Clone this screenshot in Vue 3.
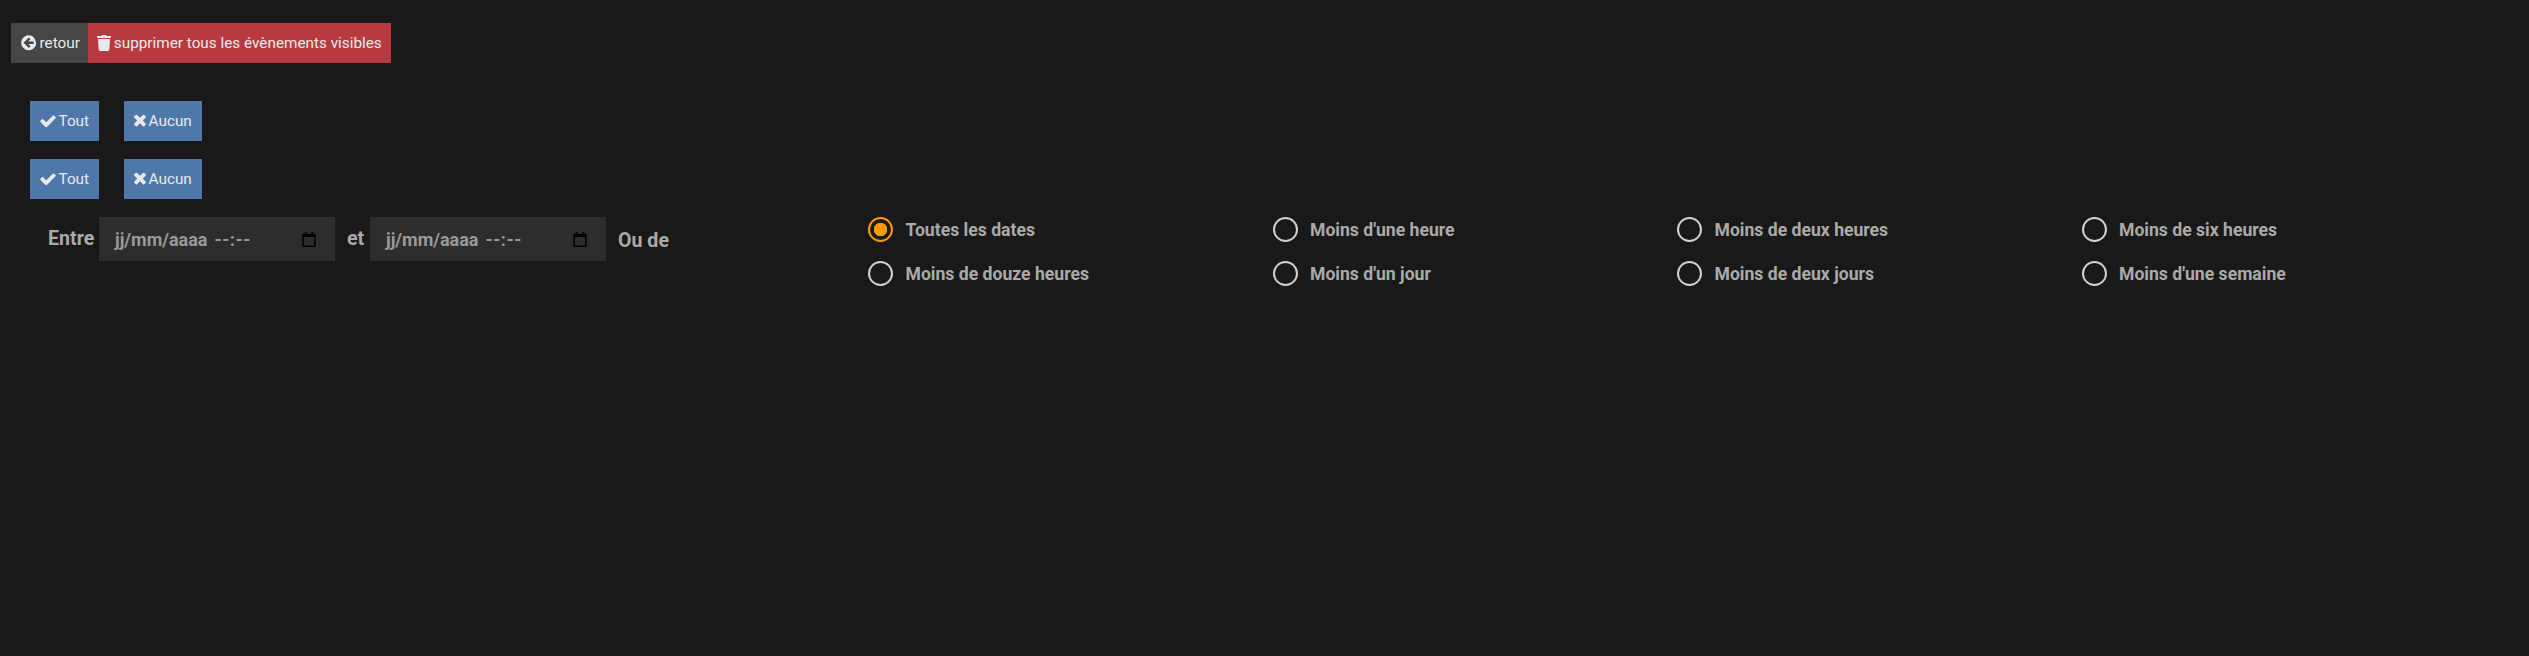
<template>
  <div class="page">
    <div class="actions">
      <a class="btn back">
        <svg class="icon" viewBox="0 0 1792 1792"><path :d="icons.back" /></svg>
        retour
      </a>
      <a class="btn danger">
        <svg class="icon trash" viewBox="0 0 448 512"><path :d="icons.trash" /></svg>
        supprimer tous les évènements visibles
      </a>
    </div>

    <div class="select-row" v-for="n in 2" :key="n">
      <a class="btn blue">
        <svg class="icon big" viewBox="0 0 1792 1792"><path :d="icons.check" /></svg>
        Tout
      </a>
      <a class="btn blue">
        <svg class="icon big narrow" viewBox="0 0 1408 1792"><path :d="icons.times" /></svg>
        Aucun
      </a>
    </div>

    <div class="filters">
      <div class="dates">
        <label class="lbl entre">Entre</label>
        <div class="date-input">
          <span class="date-text">jj/mm/aaaa</span>
          <span class="time-text">--:--</span>
          <svg class="cal" viewBox="0 0 16 18"><path :d="icons.calendar" /></svg>
        </div>
        <label class="lbl et">et</label>
        <div class="date-input">
          <span class="date-text">jj/mm/aaaa</span>
          <span class="time-text">--:--</span>
          <svg class="cal" viewBox="0 0 16 18"><path :d="icons.calendar" /></svg>
        </div>
        <label class="lbl ou">Ou de</label>
      </div>
      <div class="ranges">
        <label class="range" v-for="r in ranges" :key="r">
          <span class="radio" :class="{ on: r === selected }" @click="selected = r"></span>
          {{ r }}
        </label>
      </div>
    </div>
  </div>
</template>

<script setup>
import { ref } from "vue"

const ranges = [
  "Toutes les dates",
  "Moins d'une heure",
  "Moins de deux heures",
  "Moins de six heures",
  "Moins de douze heures",
  "Moins d'un jour",
  "Moins de deux jours",
  "Moins d'une semaine",
]

const selected = ref("Toutes les dates")

const icons = {
  back: "M1408 960v-128q0-26-19-45t-45-19h-502l189-189q19-19 19-45t-19-45l-91-91q-18-18-45-18t-45 18l-362 362-91 91q-18 18-18 45t18 45l91 91 362 362q18 18 45 18t45-18l91-91q18-18 18-45t-18-45l-189-189h502q26 0 45-19t19-45zm256-64q0 209-103 385.5t-279.5 279.5-385.5 103-385.5-103-279.5-279.5-103-385.5 103-385.5 279.5-279.5 385.5-103 385.5 103 279.5 385.5 103 385.5z",
  trash: "M432 32H312l-9.4-18.7A24 24 0 0 0 281.1 0H166.8a23.72 23.72 0 0 0-21.4 13.3L136 32H16A16 16 0 0 0 0 48v32a16 16 0 0 0 16 16h416a16 16 0 0 0 16-16V48a16 16 0 0 0-16-16zM53.2 467a48 48 0 0 0 47.9 45h245.8a48 48 0 0 0 47.9-45L416 128H32z",
  check: "M1671 566q0 40-28 68l-724 724-136 136q-28 28-68 28t-68-28l-136-136-362-362q-28-28-28-68t28-68l136-136q28-28 68-28t68 28l294 295 656-657q28-28 68-28t68 28l136 136q28 28 28 68z",
  times: "M1298 1214q0 40-28 68l-136 136q-28 28-68 28t-68-28l-294-294-294 294q-28 28-68 28t-68-28l-136-136q-28-28-28-68t28-68l294-294-294-294q-28-28-28-68t28-68l136-136q28-28 68-28t68 28l294 294 294-294q28-28 68-28t68 28l136 136q28 28 28 68t-28 68l-294 294 294 294q28 28 28 68z",
  calendar: "M3 0h2v2h6V0h2v2h1.500A1.500 1.500 0 0 1 16 3.500v13a1.500 1.500 0 0 1-1.500 1.500h-13A1.500 1.500 0 0 1 0 16.500v-13A1.500 1.500 0 0 1 1.500 2H3zM1.800 6v10.200h12.400V6z",
}
</script>

<style>
html,
body {
  background: #191919;
}
</style>

<style scoped>
.page {
  width: 2529px;
  height: 656px;
  box-sizing: border-box;
  padding: 23px 0 0 11px;
  background: #191919;
  font-family: Roboto, "Liberation Sans", sans-serif;
}

.actions {
  display: flex;
  margin-bottom: 38px;
}

.btn {
  display: flex;
  align-items: center;
  gap: 3px;
  height: 40px;
  box-sizing: border-box;
  padding: 0 9px;
  color: #e9e9e9;
  font-size: 15.3px;
  cursor: pointer;
}

.back {
  gap: 2.5px;
  padding: 0 8px 0 8.5px;
  background: #454647;
}

.danger {
  background: #b8393f;
}

.blue {
  gap: 2px;
  padding: 0 10px 0 8.5px;
  background: #5077aa;
}

.icon {
  width: 17.5px;
  height: 17.5px;
  fill: currentColor;
  flex: none;
}

.trash {
  width: 14px;
  height: 16px;
}

.big {
  width: 18px;
  height: 18px;
}

.narrow {
  width: 14px;
}

.select-row {
  display: flex;
  gap: 25px;
  margin: 0 0 18px 19px;
}

.filters {
  display: flex;
  margin-top: 1px;
}

.dates {
  display: flex;
  align-items: flex-start;
  width: 857px;
  flex: none;
}

.lbl {
  color: #aaaaaa;
  font-size: 19.6px;
  font-weight: 700;
  line-height: 44px;
}

.entre {
  margin-left: 37px;
  width: 51px;
}

.et {
  width: 35px;
  padding-left: 6px;
  box-sizing: border-box;
  text-align: center;
}

.ou {
  margin: 2px 0 0 12px;
}

.date-input {
  display: flex;
  align-items: center;
  width: 236px;
  height: 44px;
  box-sizing: border-box;
  padding: 0 19px 0 16px;
  background: #2d2d2d;
  color: #999999;
  font-size: 18px;
  font-weight: 700;
}

.time-text {
  margin-left: 7px;
  letter-spacing: 0.6px;
}

.cal {
  width: 14px;
  height: 15px;
  margin-left: auto;
  fill: #000;
}

.ranges {
  display: grid;
  grid-template-columns: repeat(4, 404.5px);
  grid-auto-rows: 44px;
}

.range {
  display: flex;
  align-items: flex-start;
  gap: 12.5px;
  color: #aaaaaa;
  font-size: 17.6px;
  font-weight: 700;
  line-height: 26px;
}

.radio {
  width: 25px;
  height: 25px;
  box-sizing: border-box;
  border: 2px solid #d0d0d0;
  border-radius: 50%;
  flex: none;
}

.radio.on {
  border-color: #ff9800;
  background: radial-gradient(circle, #ff9800 0 6.5px, transparent 7px);
}
</style>
